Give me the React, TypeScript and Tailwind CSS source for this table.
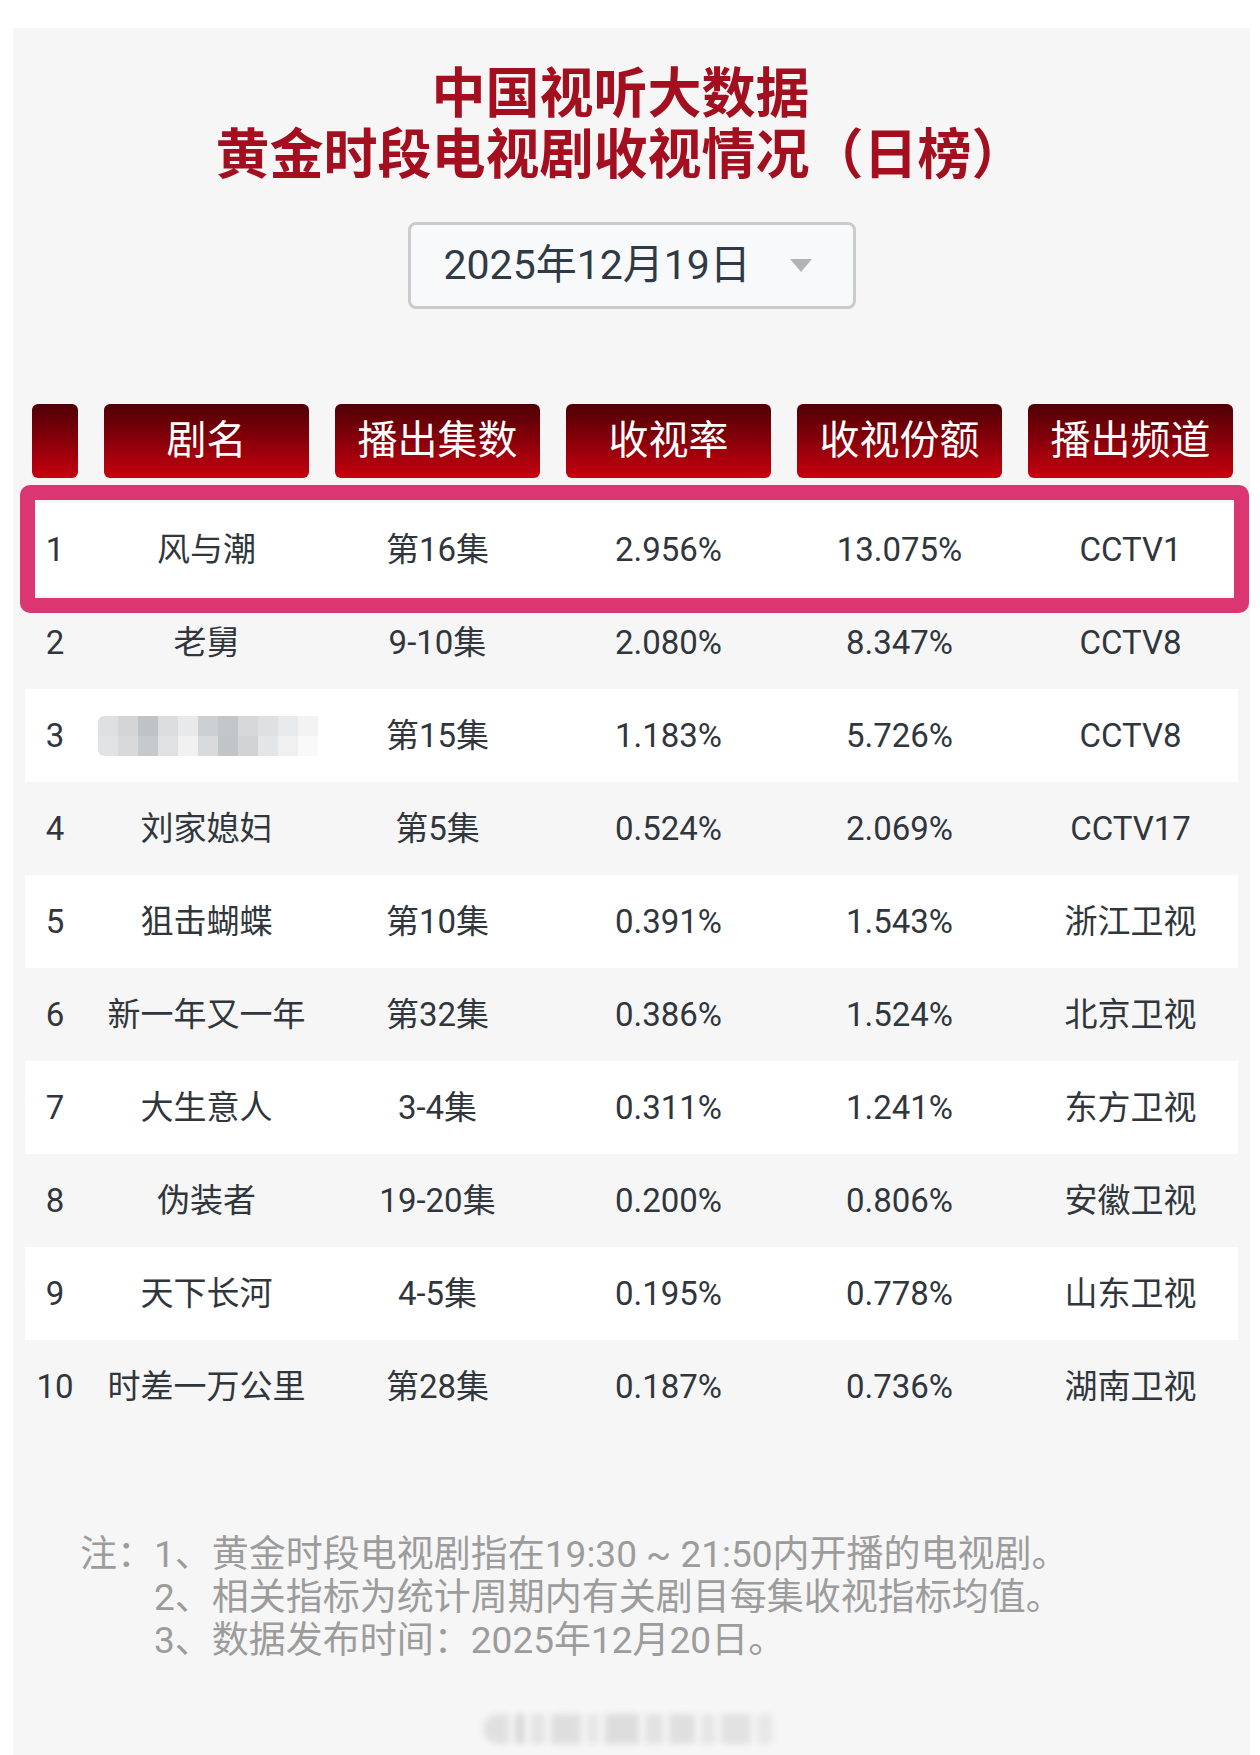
import React from 'react';

interface Row {
  rank: string;
  name: string;
  episodes: string;
  rating: string;
  share: string;
  channel: string;
}

const ROWS: Row[] = [
  { rank: '1', name: '风与潮', episodes: '第16集', rating: '2.956%', share: '13.075%', channel: 'CCTV1' },
  { rank: '2', name: '老舅', episodes: '9-10集', rating: '2.080%', share: '8.347%', channel: 'CCTV8' },
  { rank: '3', name: '', episodes: '第15集', rating: '1.183%', share: '5.726%', channel: 'CCTV8' },
  { rank: '4', name: '刘家媳妇', episodes: '第5集', rating: '0.524%', share: '2.069%', channel: 'CCTV17' },
  { rank: '5', name: '狙击蝴蝶', episodes: '第10集', rating: '0.391%', share: '1.543%', channel: '浙江卫视' },
  { rank: '6', name: '新一年又一年', episodes: '第32集', rating: '0.386%', share: '1.524%', channel: '北京卫视' },
  { rank: '7', name: '大生意人', episodes: '3-4集', rating: '0.311%', share: '1.241%', channel: '东方卫视' },
  { rank: '8', name: '伪装者', episodes: '19-20集', rating: '0.200%', share: '0.806%', channel: '安徽卫视' },
  { rank: '9', name: '天下长河', episodes: '4-5集', rating: '0.195%', share: '0.778%', channel: '山东卫视' },
  { rank: '10', name: '时差一万公里', episodes: '第28集', rating: '0.187%', share: '0.736%', channel: '湖南卫视' },
];

const HEADERS = ['剧名', '播出集数', '收视率', '收视份额', '播出频道'];

// mosaic over the hidden title in row 3
const MOSAIC_TOP = ['#dfe0e1', '#d3d5d7', '#c0c3c6', '#dadcdd', '#e8e9ea', '#cdd0d2', '#c4c7c9', '#d6d8da', '#dfe0e1', '#e9eaeb', '#f3f3f3'];
const MOSAIC_BOTTOM = ['#e2e3e4', '#d7d9da', '#c7cacc', '#e0e1e2', '#f1f1f1', '#d8dadb', '#c2c5c7', '#d1d3d5', '#e4e5e6', '#f0f0f0', '#f9f9f9'];

const Mosaic: React.FC = () => (
  <div className="flex flex-col blur-[0.6px] rounded-l-[6px] overflow-hidden">
    <div className="flex">
      {MOSAIC_TOP.map((c, i) => (
        <div key={i} className="w-[20px] h-[20px]" style={{ backgroundColor: c }} />
      ))}
    </div>
    <div className="flex">
      {MOSAIC_BOTTOM.map((c, i) => (
        <div key={i} className="w-[20px] h-[20px]" style={{ backgroundColor: c }} />
      ))}
    </div>
  </div>
);

const App: React.FC = () => {
  return (
    <div
      className="h-[1755px] bg-white pt-[28px] pl-[13px] pr-[10px] overflow-hidden"
      style={{ fontFamily: 'Roboto, "Noto Sans CJK SC", sans-serif' }}
    >
      <div className="h-full bg-[#f6f6f6] flex flex-col">
        {/* title */}
        <div
          className="pt-[31px] pr-[22px] text-center text-[54px] leading-[61px] font-bold text-[#a30f1f]"
          style={{ fontFamily: '"Noto Sans CJK SC", sans-serif' }}
        >
          <div>中国视听大数据</div>
          <div>黄金时段电视剧收视情况（日榜）</div>
        </div>

        {/* date picker */}
        <div className="mt-[41px] flex justify-center">
          <div className="w-[448px] h-[87px] border-[3px] border-[#cbcbcb] rounded-[8px] bg-[#f8f9fa] flex items-center justify-between pl-[33px] pr-[41px]">
            <span className="text-[41px] text-[#2f3a44]">2025年12月19日</span>
            <svg width="22" height="13" viewBox="0 0 22 13">
              <path d="M0 0 H22 L11 13 Z" fill="#b3b3b3" />
            </svg>
          </div>
        </div>

        {/* table header */}
        <div className="mt-[95px] pl-[19px] flex gap-[26px]">
          <div className="w-[46px] h-[74px] rounded-[6px] bg-linear-to-b from-[#4e0005] to-[#c9000f]" />
          {HEADERS.map((h) => (
            <div
              key={h}
              className="w-[205px] h-[74px] rounded-[6px] bg-linear-to-b from-[#4e0005] to-[#c9000f] flex items-center justify-center text-white text-[40px]"
            >
              {h}
            </div>
          ))}
        </div>

        {/* rows */}
        <div className="mt-[25px] px-[12px]">
          {ROWS.map((r, i) => (
            <div
              key={r.rank}
              className={`relative h-[93px] pl-[7px] flex gap-[26px] items-center text-[33px] text-[#30363c] ${
                i % 2 === 0 ? 'bg-white' : ''
              }`}
            >
              {i === 0 && (
                <div className="absolute z-10 left-[-5px] top-[-18px] w-[1229px] h-[128px] border-[15px] border-[#db3572] rounded-[10px]" />
              )}
              <div className="w-[46px] text-center">{r.rank}</div>
              <div className="w-[205px] flex justify-center">
                {r.name ? <span>{r.name}</span> : <div className="ml-[3px]"><Mosaic /></div>}
              </div>
              <div className="w-[205px] text-center">{r.episodes}</div>
              <div className="w-[205px] text-center">{r.rating}</div>
              <div className="w-[205px] text-center">{r.share}</div>
              <div className="w-[205px] text-center">{r.channel}</div>
            </div>
          ))}
        </div>

        {/* notes */}
        <div className="mt-[100px] pl-[67px] flex text-[37px] leading-[43px] text-[#9c9c9c]">
          <span className="w-[74px] shrink-0">注：</span>
          <div>
            <div>1、黄金时段电视剧指在19:30 ~ 21:50内开播的电视剧。</div>
            <div>2、相关指标为统计周期内有关剧目每集收视指标均值。</div>
            <div>3、数据发布时间：2025年12月20日。</div>
          </div>
        </div>

        {/* watermark */}
        <div className="mt-[52px] flex justify-center pr-[8px]">
          <div className="flex items-center gap-[6px] blur-[3px] opacity-70">
            <div className="w-[26px] h-[30px] rounded-l-full bg-[#d8d8d8]" />
            <div className="w-[10px] h-[30px] bg-[#cfcfcf]" />
            <div className="w-[14px] h-[30px] bg-[#dcdcdc]" />
            <div className="w-[30px] h-[30px] bg-[#d4d4d4]" />
            <div className="w-[12px] h-[30px] bg-[#e0e0e0]" />
            <div className="w-[34px] h-[30px] bg-[#d2d2d2]" />
            <div className="w-[18px] h-[30px] bg-[#dadada]" />
            <div className="w-[26px] h-[30px] bg-[#d6d6d6]" />
            <div className="w-[14px] h-[30px] bg-[#dedede]" />
            <div className="w-[30px] h-[30px] bg-[#d9d9d9]" />
            <div className="w-[16px] h-[30px] bg-[#e2e2e2]" />
          </div>
        </div>
      </div>
    </div>
  );
};

export default App;
